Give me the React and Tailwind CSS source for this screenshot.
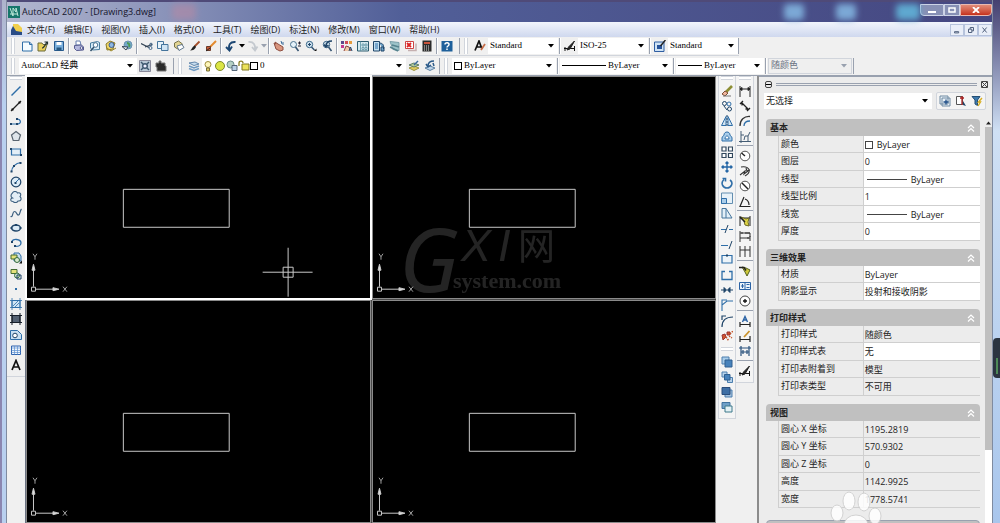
// src/App.jsx
import React, { useState } from "react";

const blue = "#2f6ea8";
const navy = "#1f4468";
const pale = "#a9cdea";

// All glyphs are drawn on a 12 x 12 grid
const icons = {
  newFile: <><path d="M1.5 2h7l2.500 2.500v6.500h-9.500z" fill="#f4fbff" stroke={blue} /><path d="M8.500 2v2.500h2.500" fill="none" stroke={blue} /></>,
  open: <><path d="M1 3h4l1 1.500h4l-2 6.500h-7z" fill="#e8cf5a" stroke="#6b6a3a" /><path d="M5 8c2 0 3-3 5-6M7.500 2h3v2.500" fill="none" stroke="#233" strokeWidth="1.200" /></>,
  save: <><path d="M1.500 1.500h9v9h-9z" fill="#7ab0dd" stroke="#285a8e" /><path d="M3.500 2h5v3h-5z" fill="#fff" /><path d="M3.500 7.500h5v3h-5z" fill="#24567f" /></>,
  print: <><path d="M3 1h4l1 4h-5z" fill="#fff" stroke="#667fae" /><path d="M1.500 5.500l7-.5 2 2v3l-7 .5-2-2z" fill="#b4b8dd" stroke="#565b8f" /><circle cx="8.500" cy="8" r="1.300" fill="#fff" stroke="#565b8f" /></>,
  preview: <><path d="M1.500 3l7-1.500 2 1v7l-7 .5-2-2z" fill="#d8ecf8" stroke="#477c9e" /><circle cx="6.500" cy="5" r="2.300" fill="#fff" stroke="#4a7390" /><path d="M5 7l-3.500 4" stroke="#30506b" strokeWidth="1.500" /></>,
  publish: <><path d="M1 4l4-3 5 2-2 6-6 1z" fill="#f0d768" stroke="#8b7a2a" /><circle cx="6.500" cy="5" r="2.500" fill="#8eb8e2" stroke="#3c5d93" /><path d="M2 8l4 3 5-3" stroke="#9a8523" fill="none" /></>,
  globe: <><circle cx="7" cy="5" r="4" fill="#74a9c9" stroke="#6b93b0" /><path d="M6 3c2 0 3 2 2 4" stroke="#4b9a53" strokeWidth="2" fill="none" /><path d="M1 6.500l4 3.500 2-3z" stroke="#345" fill="#e8eef2" /></>,
  cut: <><path d="M0 3.500l8 4M4 7l7-2.500" stroke="#345" strokeWidth="1.200" /><circle cx="9.500" cy="8" r="1.500" fill="none" stroke="#47698c" /><circle cx="10" cy="4.500" r="1.300" fill="none" stroke="#47698c" /></>,
  copyDoc: <><path d="M.5 1.500h6v7h-6z" fill="#e6f2fa" stroke="#44749c" /><path d="M4.500 4.500h6.500v6h-6.500z" fill="#cfe4f4" stroke="#44749c" /></>,
  paste: <><path d="M1.500 3l4-2 4 3-3 6-5-3z" fill="#e2d493" stroke="#77734c" /><path d="M4 6l5-1.500 2 3-5 3z" fill="#fff" stroke="#607890" /></>,
  brush: <><path d="M10.500 1.500l-5 5" stroke="#a5502c" strokeWidth="1.800" /><path d="M6 5.500c-3 1-3 4-5 5 3 0 5-1 6-3.500z" fill="#222" /></>,
  pencil: <><path d="M11 1l-6 6" stroke="#e38b2f" strokeWidth="2" /><path d="M1.500 6.500h4v4h-4z" fill="#cc5b37" stroke="#6a3b2a" /><path d="M5 8l-4 3" stroke="#222" /></>,
  undo: <path d="M10.500 2C5 1.500 3 5 4.500 10M1 7l3.500 3.500 2.500-4" fill="none" stroke="#1c4673" strokeWidth="1.900" />,
  redo: <path d="M1.500 2C7 1.500 8.500 5 8 10M5 7l3 3.500 2.500-4" fill="none" stroke="#c4c9cf" strokeWidth="1.800" />,
  pan: <><path d="M1 3l2 1-1-2 3 2 5 3v3l-3 1-4-2z" fill="#d9957d" stroke="#8f4e40" /><path d="M8 1l1 3M10 2v3" stroke="#3b6b99" /></>,
  zoomRt: <><circle cx="4.500" cy="4.500" r="3" fill="#e5f2fa" stroke="#4a7390" /><path d="M6.500 7l3 4" stroke="#335270" strokeWidth="1.500" /><path d="M9 3h3M10.500 1.500v3M9 6h3" stroke="#223" /></>,
  zoomWin: <><circle cx="4.500" cy="4.500" r="3.200" fill="#cfe2ef" stroke="#3a6788" /><path d="M3 4.500h3M4.500 3v3" stroke={navy} /><path d="M6.500 7l3 3" stroke="#335270" strokeWidth="1.500" /><path d="M9 11h2.500v-2.500z" fill="#111" /></>,
  zoomPrev: <><circle cx="5.500" cy="4.500" r="3.200" fill="#d8e8f2" stroke="#365e80" /><path d="M11 1c-4 0-6 2-6 5M3 4.500l2 2.500 2.500-2" fill="none" stroke={navy} strokeWidth="1.500" /><path d="M7.500 7l3 4" stroke="#335270" strokeWidth="1.600" /></>,
  props: <><path d="M0 1h3v3h-3z" fill="#5a4a8c" /><path d="M4 1h3v3h-3z" fill="#d04a58" /><path d="M8 1h3v3h-3z" fill="#e59b3c" /><path d="M0 5h3v3h-3z" fill="#c43a92" /><path d="M3 11l2-5 3 1 2 4" fill="#f0c8a8" stroke="#844" /><path d="M8 11l1.500-4 1.500 4" fill="none" stroke={navy} /></>,
  designCenter: <><path d="M.5 1.500h11v9.500h-11z" fill="#d5e9ee" stroke="#2d5d70" /><path d="M3.500 1.500v9.500M5 4h2v2h-2zM8 4h2v2h-2zM5 7.500h2v2h-2zM8 7.500h2v2h-2z" fill="none" stroke="#5b93a3" strokeWidth=".8" /></>,
  palettes: <><path d="M.5 1.500h6v9.500h-6z" fill="#c2def0" stroke={navy} /><path d="M2 4h3M2 6h3M2 8h3" stroke={blue} /><path d="M6 3c4 0 5 2 4.500 6M8 7h3v4h-3z" fill="#6da2c8" stroke={navy} /></>,
  sheetSet: <><path d="M1 1.500l9 1v8l-6-1z" fill="#9cc3c9" stroke="#7ba0aa" /><path d="M1 7l8 4M3 5l7 2" stroke="#55838e" strokeWidth="1.500" /></>,
  markup: <><path d="M.5 1.500h8v7h-8z" fill="#fff" stroke="#cc4444" /><path d="M2 3l4 4M6 3l-4 4" stroke="#d22" strokeWidth="1.800" /><path d="M3 10.500h8v-7" stroke="#c5b0b0" strokeWidth="1.500" fill="none" /></>,
  calc: <><path d="M1.500 0.500h9v11h-9z" fill="#2b2b2b" /><path d="M3 2h6v2h-6z" fill="#c9543c" /><path d="M3 6h6M3 8h6M3 10h6" stroke="#ddd" strokeDasharray="1 1" /></>,
  help: <><path d="M.5 1h11v10.500h-11z" fill="#1e609b" /><path d="M4 4.500c0-2.500 4.500-2 4 0 0 1.500-2 1.500-2 3M6 8.500v1.500" fill="none" stroke="#fff" strokeWidth="1.500" /></>,
  textStyle: <><path d="M1 10.500L5 1l3 8M2.500 7h4.500" fill="none" stroke="#111" strokeWidth="1.700" /><path d="M11 4l-4 6" stroke="#c66d48" strokeWidth="1.800" /></>,
  dimStyle: <><path d="M0 8.500h11M1 7v4M10.500 6v5" stroke="#111" /><path d="M10.500 1l-6 6-1.500 3 3-1z" fill="#222" stroke="#222" /></>,
  tableStyle: <><path d="M.5 2h9.500v9.500h-9.500z" fill="#cfe3f5" stroke="#2f5ea2" /><path d="M3 5h5v4h-5z" fill="#27539a" /><path d="M11.500 0l-5 6" stroke="#222" strokeWidth="1.500" /></>,
  gear: <><path d="M.5.500h11v11h-11z" fill="#b8c7d4" stroke="#889" /><circle cx="6" cy="6" r="2.300" fill="#eef" stroke="#3c566e" strokeWidth="1.400" /><path d="M2 2l2 2M10 2l-2 2M2 10l2-2M10 10l-2-2" stroke="#3c566e" strokeWidth="1.400" /></>,
  home: <path d="M1 3h3V1h2v2h4v3h1v5h-9v-4h-1z" fill="#2a2a2a" stroke="#777" />,
  layers: <><path d="M1 3l6-1 4 2-5 1.500z" fill="#c7ddef" stroke="#6488ac" /><path d="M1 6l5 2 5-2M1 8.500l5 2 5-2" fill="none" stroke="#6f9ac2" strokeWidth="1.500" /></>,
  bulb: <><circle cx="6" cy="4.500" r="3" fill="#fff7bb" stroke="#9d8c3d" /><path d="M4.500 8h3v3h-3z" fill="#e0c75c" stroke="#77703b" /></>,
  sun: <circle cx="6" cy="6" r="4.500" fill="#dbe545" stroke="#7d882b" />,
  vpFreeze: <><circle cx="4.500" cy="4.500" r="3.500" fill="#b5d0c5" stroke="#6b8c8c" /><path d="M6 5.500h5v5h-5z" fill="#b9d1e6" stroke="#567" /></>,
  lock: <><path d="M1 6V3c0-2.500 4-2.500 4 0" fill="none" stroke="#8a7f24" strokeWidth="1.300" /><path d="M4 4h7v6h-7z" fill="#ece25a" stroke="#81791f" /></>,
  layerCur: <><path d="M1 8l5-2 5 2-5 2.500z" fill="#e0ca5c" stroke="#9b9440" /><path d="M1 5l5-2 5 2-5 2z" fill="#b9cf9c" stroke="#5c7c65" /><path d="M10 1L6 5" stroke="#3b6a9d" strokeWidth="1.500" /></>,
  layerPrev: <><path d="M1 8l5-2 5 2-5 2.500z" fill="#bcd3e8" stroke="#5b81a4" /><path d="M10 1c-4 0-6 1-6 5M2 4l2 3 3-2M9 3l1 3" fill="none" stroke="#2b5a89" strokeWidth="1.500" /></>,
  line: <path d="M1.500 10.500l9-9" stroke={blue} strokeWidth="1.400" />,
  xline: <><path d="M1 11l10-10" stroke="#222" strokeWidth="1.200" /><path d="M1.500 8.500h2v2h-2zM8.500 1.500h2v2h-2z" fill="#111" /></>,
  pline: <><path d="M1 9h6c5 0 4-5 0-5" fill="none" stroke={blue} strokeWidth="1.200" /><path d="M0 8h2v2h-2zM6 8h2v2h-2zM6 3h2v2h-2z" fill={navy} /></>,
  polygon: <path d="M6 1.500l4.500 3.500-1.700 5.500h-5.600l-1.700-5.500z" fill="#dfe5ea" stroke="#5a6570" strokeWidth="1.200" />,
  rect: <><path d="M1.500 3h9v6h-9z" fill="#e3eef7" stroke={blue} strokeWidth="1.200" /><path d="M0 2h2v2h-2zM10 8h2v2h-2z" fill={navy} /></>,
  arc: <><path d="M1.500 11c0-5 4-9 9.500-9.500" fill="none" stroke={blue} strokeWidth="1.200" /><path d="M.5 9.500h2v2h-2zM3 4h2v2h-2zM9.500 1h2v2h-2z" fill={navy} /></>,
  circle: <><circle cx="6" cy="6" r="4.800" fill="#dcebf6" stroke={navy} strokeWidth="1.200" /><path d="M5 7l4-4" stroke={blue} /><path d="M4.500 6h2v2h-2z" fill={navy} /></>,
  cloud: <path d="M2.500 2c1-2 4-2 5 0 3-1 4 1.500 2.500 3.500 2 2 1 5-2 4.500-1 2-4 2-5 .5-3 0-3-3-.5-3.500C.500 6 .500 3.500 2.500 2z" fill="#e3edf5" stroke="#3c5f80" strokeWidth="1.100" />,
  spline: <path d="M.5 9.500c3 1 1.500-5 4-5s2 4 4 3.500 1-4 3-6" fill="none" stroke="#3c5f80" strokeWidth="1.200" />,
  ellipse: <><ellipse cx="6" cy="6" rx="4.500" ry="3" fill="#dcebf6" stroke={navy} strokeWidth="1.300" /><path d="M.5 5h2v2h-2zM9.500 5h2v2h-2zM5 2h2v2h-2z" fill={navy} /></>,
  ellArc: <><path d="M2 5c0-4 9-3 9 1 0 3-4 4-6 3" fill="none" stroke={blue} strokeWidth="1.300" /><path d="M1 4h2v2h-2zM4 8h2v2h-2z" fill={navy} /></>,
  insert: <><path d="M4 1h5l2 3v5h-7z" fill="#c9dff0" stroke={blue} /><path d="M1 3h6v4h-6z" fill="#e5e27a" stroke="#446b32" /><circle cx="7" cy="8" r="2.500" fill="#d8ead0" stroke="#346a3c" /><path d="M9 11.500h3v-3z" fill="#111" /></>,
  block: <><path d="M1 1.500h6v4h-6z" fill="#e5e27a" stroke="#446b32" /><circle cx="7" cy="7.500" r="2.500" fill="#c9e2c9" stroke="#346a3c" /><path d="M7 7h4v4h-4z" fill="none" stroke={navy} /></>,
  point: <path d="M5 5h2v2h-2z" fill={blue} />,
  hatch: <><path d="M2 2.500h8v7h-8z" fill="#cfe4f4" stroke={blue} /><path d="M3 8l5-5M5 9l4-4M2 0v12M10 0v12M0 2.500h12M0 9.500h12" stroke={blue} strokeWidth=".8" /></>,
  gradient: <><path d="M2 2.500h8v7h-8z" fill="#546172" stroke="#161e29" /><path d="M2 0v12M10 0v12M0 2.500h12M0 9.500h12" stroke="#161e29" /></>,
  region: <><path d="M.5 1.500h7l4 4v5h-11z" fill="#c7dff2" stroke={blue} /><circle cx="5" cy="6.500" r="2.300" fill="#fff" stroke={navy} /></>,
  table: <><path d="M1.500 2h9v8.500h-9z" fill="#eef5fc" stroke="#2e63ae" /><path d="M1.500 4h9M1.500 6.500h9M1.500 8.500h9M4.500 2v8.500M7.500 2v8.500" stroke="#5b8fd0" strokeWidth=".7" /></>,
  mtext: <path d="M2 11L6 1.500l4 9.500M3.500 8h5" fill="none" stroke="#111" strokeWidth="1.700" />,
  erase: <><path d="M11 1l-6 6" stroke="#8d8f34" strokeWidth="2.600" /><path d="M1 9l3-3 3 2-3 3z" fill="#eeb59c" stroke="#7d4e35" /><path d="M2 11h8" stroke="#777" /></>,
  copy: <><circle cx="3.500" cy="3.500" r="2" fill="none" stroke={navy} /><circle cx="8" cy="4" r="2" fill="none" stroke={blue} /><path d="M3 6l3 4" stroke={navy} /><circle cx="8.500" cy="9" r="2" fill="none" stroke={navy} /></>,
  mirror: <><path d="M5 1.500v9h-4.500zM7 1.500v9h4.500z" fill="#d4e4f0" stroke={blue} /><path d="M6 0v12" stroke={navy} strokeDasharray="2 1" /></>,
  offset: <><path d="M1 7c0-2 2-2 2-3 0-4 6-4 6 0 0 1 2 1 2 3v3h-10z" fill={pale} stroke={blue} /><path d="M4 8c0-4 4-4 4 0z" fill="#fff" stroke={blue} /></>,
  array: <path d="M1 1h4v4h-4zM7.500 1h4v4h-4zM1 7.500h4v4h-4zM7.500 7.500h4v4h-4z" fill="#fff" stroke="#31475c" strokeWidth="1.200" />,
  move: <path d="M6 1v10M1 6h10M4.500 2.500L6 1l1.500 1.500M4.500 9.500L6 11l1.500-1.500M2.500 4.500L1 6l1.500 1.500M9.500 4.500L11 6l-1.500 1.500" fill="none" stroke="#2566a5" strokeWidth="1.400" />,
  rotate: <path d="M3 2.500C-1 6 2 11 6 11s7-5 3-8M1.500 1.500h3v3" fill="none" stroke={blue} strokeWidth="1.600" />,
  scale: <><path d="M.5 1h11v10.500h-11z" fill="#e7f1f8" stroke="#638eb0" /><path d="M.5 6.500h5v5h-5z" fill={pale} stroke={blue} /></>,
  stretch: <path d="M1 1.500h4l6 9.500h-10zM5 1.500v9.500" fill="#e2eef7" stroke="#44749c" />,
  trim: <><path d="M0 6.500h5M8 6.500h4" stroke={blue} /><path d="M4 10l3-8" stroke={navy} /></>,
  extend: <><path d="M0 7.500h7" stroke={blue} /><path d="M8 11l3-8" stroke={navy} /></>,
  breakPt: <><path d="M1 2.500h10v7.500h-10z" fill="#edf4f9" stroke={blue} strokeWidth="1.200" /><path d="M5 1.500h2v2h-2z" fill={navy} /></>,
  breakGap: <path d="M4 2.500h-3v8h10v-8h-3" fill="none" stroke={blue} strokeWidth="1.300" />,
  join: <path d="M0 6h4M8 6h4M3 3.500v5L5.500 6zM9 3.500v5L6.500 6z" fill={navy} stroke={navy} />,
  chamfer: <path d="M1 12V6l5-4h6M1 6v-5h5" fill="none" stroke={blue} strokeWidth="1.100" />,
  fillet: <path d="M1 12C1 5 5 2 12 2M1 5v-4h4" fill="none" stroke={navy} strokeWidth="1.200" />,
  explode: <><path d="M1 5l3-1 1 3-3 3zM6 2h3v3h-3z" fill="#d1552d" stroke="#933" /><path d="M5 7l3 4M8 6l3 2M9 4l3-3" stroke="#c4572b" strokeDasharray="1.500 1" strokeWidth="1.500" /></>,
  front: <><path d="M1 1h7v7h-7z" fill={pale} stroke="#4c7fae" /><path d="M4 4h7v7h-7z" fill="#4782bb" stroke="#2e5f90" /></>,
  back: <><path d="M1 1h5v5h-5zM6.500 6.500h5v5h-5z" fill="#b7d2ea" stroke="#4c7fae" /><path d="M3.500 3.500h5.500v5.500h-5.500z" fill="#4782bb" stroke="#2e5f90" /></>,
  above: <><path d="M4 4h7v7h-7z" fill="#a5c2de" stroke="#4c7fae" /><path d="M1 1.500h8v7h-8z" fill="#3f6fa5" stroke="#2b4e7c" /></>,
  under: <><path d="M1 1.500h8v6h-8z" fill="#6e9fc7" stroke="#3f729e" /><path d="M4 5h7v6h-7z" fill="#e3f1f5" stroke="#3d788a" /></>,
  dimLin: <path d="M1 1v11M11 1v11M1 4h10M1 4l2-1.500v3zM11 4L9 2.500v3z" stroke="#222" fill="#222" />,
  dimAli: <path d="M3 3l6 6M1 4l3-3M8 11l3-3M3 3v2.500M9 9h-2.500" stroke="#222" strokeWidth="1.300" fill="none" />,
  dimArc: <><path d="M1 11C1 5 5 1 11 1.500" fill="none" stroke="#333" strokeWidth="1.300" /><path d="M5 11c0-3 2-5 6-5" fill="none" stroke={blue} strokeWidth="1.300" /></>,
  dimOrd: <path d="M2 0v12M0 10.500h12M2 4h3M5 9l1-4h3l2-4M9 5v5" fill="none" stroke="#445c74" />,
  dimRad: <><circle cx="6" cy="6" r="4.800" fill="#fff" stroke="#555" /><path d="M6 6L2.500 3" stroke="#222" strokeWidth="1.400" /></>,
  dimJog: <path d="M2 2c5-1 9 1 8 5-1 3-3 3-4 4M1 10l5-4-1 3 4-3M7 3l1 3 3-1" fill="none" stroke="#333" strokeWidth="1.100" />,
  dimDia: <><circle cx="6" cy="6" r="4.800" fill="#fff" stroke="#555" /><path d="M3 3l6 6" stroke="#222" strokeWidth="1.400" /></>,
  dimAng: <path d="M5 1L1 10.500h10.500M6 3c3 1 4 3 4 6" fill="none" stroke="#222" strokeWidth="1.200" />,
  quick: <><path d="M1 1v10M11 1v10M1 3h10" stroke="#222" /><path d="M2 2l5 2 3-1-1 4 1 4-4-1-1-4z" fill="#dfd445" stroke="#6b6823" /><path d="M1 2l5 5" stroke="#222" strokeWidth="1.500" /></>,
  base: <path d="M1 1v11M6 3h5v4M1 3h10M1 8h10M11 6v5M3 2v2M9 7v2" stroke="#333" fill="none" />,
  cont: <path d="M1 1v11M6 1v11M11 1v11M1 5h10" stroke="#333" fill="none" />,
  leader: <><path d="M3 2l4 1 4 2-1 2-2 4-2-4z" fill="#cfc93c" stroke="#53601f" /><path d="M0 2.500h5l2 3" fill="none" stroke="#222" strokeWidth="1.500" /></>,
  tol: <><path d="M.5 2.500h11v7h-11z" fill="#eaf3fb" stroke="#2a62a5" /><path d="M6 2.500v7M2 6h3M3.500 4v4M7.500 4.500h3M7.500 7.500h3" stroke="#2a62a5" /></>,
  center: <><circle cx="6" cy="6" r="5" fill="#fff" stroke="#444" /><path d="M6 4v4M4 6h4" stroke="#111" strokeWidth="1.300" /></>,
  dimEdit: <><path d="M3.500 7L6 1.500l2.500 5.500M4.500 5h3" fill="none" stroke="#2a62a5" strokeWidth="1.400" /><path d="M1 7v5M11 7v5M1 9.500h10" stroke="#222" strokeWidth="1.200" /></>,
  dimText: <><path d="M10.500 1L5 7" stroke="#c9922c" strokeWidth="1.800" /><path d="M1 6v6M11 6v6M1 9.500h10" stroke="#222" strokeWidth="1.200" /></>,
  update: <path d="M2 1v10M10 1v10M0 3h12M2 7h8M4 5v4M8 5v4" stroke="#28517c" strokeWidth="1.200" fill="none" />,
  pick: <><path d="M1.500 1.500h6v8h-6z" fill="#fff" stroke="#555" /><path d="M7 1v9M5 3h4" stroke="#a22" strokeWidth="1.300" /><path d="M8 6l3 5-3-1z" fill={navy} /></>,
  pickAdd: <><path d="M1 1h8v8h-8zM3 3h8v8h-8z" fill="#e8f0f7" stroke="#6f8aa2" /><path d="M7 4.500v5M4.500 7h5" stroke="#1d4c86" strokeWidth="1.300" /></>,
  filter: <><path d="M1 1.500h8L6.500 5v5.500L4 9V5z" fill="#3d79ad" stroke="#244f76" /><path d="M11 3L7.500 7h2L7 11" stroke="#d8ae21" fill="none" strokeWidth="1.400" /></>,
};

const menus = [
  "文件(F)", "编辑(E)", "视图(V)", "插入(I)", "格式(O)", "工具(T)",
  "绘图(D)", "标注(N)", "修改(M)", "窗口(W)", "帮助(H)",
];

const drawTools = [
  "line", "xline", "pline", "polygon", "rect", "arc", "circle", "cloud", "spline", "ellipse",
  "ellArc", "insert", "block", "point", "hatch", "gradient", "region", "table", "mtext",
];

const modifyTools = [
  "erase", "copy", "mirror", "offset", "array", "move", "rotate", "scale", "stretch", "trim",
  "extend", "breakPt", "breakGap", "join", "chamfer", "fillet", "explode",
];

const dimGroups = [
  ["dimLin", "dimAli", "dimArc", "dimOrd"],
  ["dimRad", "dimJog", "dimDia", "dimAng"],
  ["quick", "base", "cont"],
  ["leader", "tol", "center"],
  ["dimEdit", "dimText", "update"],
  ["dimStyle"],
];

const sections = [
  {
    title: "基本",
    rows: [
      { name: "颜色", value: "ByLayer", swatch: true, edit: true },
      { name: "图层", value: "0", edit: true },
      { name: "线型", value: "ByLayer", line: true, edit: true },
      { name: "线型比例", value: "1", edit: true },
      { name: "线宽", value: "ByLayer", line: true, edit: true },
      { name: "厚度", value: "0", edit: true },
    ],
  },
  {
    title: "三维效果",
    rows: [
      { name: "材质", value: "ByLayer", edit: true },
      { name: "阴影显示", value: "投射和接收阴影", edit: true },
    ],
  },
  {
    title: "打印样式",
    rows: [
      { name: "打印样式", value: "随颜色" },
      { name: "打印样式表", value: "无", edit: true },
      { name: "打印表附着到", value: "模型" },
      { name: "打印表类型", value: "不可用" },
    ],
  },
  {
    title: "视图",
    rows: [
      { name: "圆心 X 坐标", value: "1195.2819" },
      { name: "圆心 Y 坐标", value: "570.9302" },
      { name: "圆心 Z 坐标", value: "0" },
      { name: "高度", value: "1142.9925" },
      { name: "宽度", value: "1778.5741" },
    ],
  },
];

function Icon({ name }) {
  return (
    <svg viewBox="0 0 12 12" className="h-3 w-3 shrink-0" aria-hidden="true">
      {icons[name]}
    </svg>
  );
}

function Tool({ name }) {
  return (
    <button aria-label={name} className="flex h-4 w-4 shrink-0 items-center justify-center">
      <Icon name={name} />
    </button>
  );
}

function Tools({ names }) {
  return names.map((name) => <Tool key={name} name={name} />);
}

function Arrow({ dim }) {
  return (
    <svg viewBox="0 0 6 4" className={dim ? "h-1 w-[6px] shrink-0 text-gray-400" : "h-1 w-[6px] shrink-0 text-black"}>
      <path d="M0 0h6L3 3.500z" fill="currentColor" />
    </svg>
  );
}

function Sep() {
  return <span className="mx-px h-4 w-[2px] shrink-0 border-l border-gray-400 bg-white" />;
}

function Grip() {
  return <span className="mx-1 h-4 w-1 shrink-0 border-x border-gray-300 bg-white" />;
}

function VGrip() {
  return <span className="mb-[3px] h-1 w-3 shrink-0 border-y border-gray-300 bg-white" />;
}

function Combo({ label, value, className, children, disabled }) {
  return (
    <label className={`flex h-4 shrink-0 items-center pr-1 ${disabled ? "border border-gray-300 bg-[#efefef]" : "bg-white"} ${className}`}>
      {children}
      <select
        aria-label={label}
        disabled={disabled}
        className="h-4 min-w-0 flex-1 appearance-none bg-transparent pl-[2px] disabled:text-gray-500"
      >
        <option>{value}</option>
      </select>
      <Arrow dim={disabled} />
    </label>
  );
}

function TitleBar() {
  return (
    <header className="flex h-[22px] shrink-0 items-center border-t-2 border-[#4f4a78] bg-linear-to-r from-[#b3b7cf] via-[#515f98] via-40% to-[#454781] pl-px text-[#14142b]">
      <svg viewBox="0 0 12 12" className="mr-[2px] h-3 w-3">
        <path d="M0 0h12v12H0z" fill="#16766b" />
        <path d="M2 2l3 8V2l3 4V2l2 8M2 8h8" fill="none" stroke="#bfeadb" />
      </svg>
      <h1 className="text-[9px]">AutoCAD 2007 - [Drawing3.dwg]</h1>
      <span className="ml-4 h-4 w-6 rounded bg-[#b58aa5] opacity-60 blur-[3px]" />
      <div className="ml-auto flex h-full items-start pt-[2px]">
        <span className="mr-8 h-4 w-5 rounded bg-[#7ca9d6] blur-[3px]" />
        <span className="mr-10 h-4 w-5 rounded bg-[#7ca9d6] blur-[3px]" />
        <span className="h-4 w-6 rounded bg-[#5fa9d0] blur-[3px]" />
        <button aria-label="最小化" className="flex h-3 w-6 items-center justify-center rounded-bl border border-[#ccd3e6] bg-[#8790b5]">
          <svg viewBox="0 0 8 6" className="h-[6px] w-2"><path d="M0 4h8v2H0z" fill="#fff" /></svg>
        </button>
        <button aria-label="还原" className="flex h-3 w-4 items-center justify-center border border-[#ccd3e6] bg-[#8790b5]">
          <svg viewBox="0 0 8 6" className="h-[6px] w-2"><path d="M1 1h6v4H1z" fill="none" stroke="#fff" strokeWidth="1.500" /></svg>
        </button>
        <button aria-label="关闭" className="flex h-3 w-8 items-center justify-center rounded-br border border-[#e8b8b0] bg-linear-to-b from-[#e08a78] to-[#c5301b]">
          <svg viewBox="0 0 8 6" className="h-[6px] w-2"><path d="M1 0l6 6M7 0L1 6" stroke="#fff" strokeWidth="1.800" /></svg>
        </button>
      </div>
    </header>
  );
}

function MenuBar() {
  return (
    <nav className="flex h-[15px] shrink-0 items-center bg-linear-to-b from-[#f2f5fc] to-[#cfd8ee] pl-1 text-[9px] text-[#222]">
      <svg viewBox="0 0 12 12" className="mr-1 h-3 w-3">
        <path d="M2 0h5l4 4v7H2z" fill="#f1cf4d" />
        <path d="M0 6l2-4 3 5 6 1v3H0z" fill="#294c87" />
      </svg>
      <div className="flex gap-[9px]">
        {menus.map((menu) => (
          <button key={menu} className="leading-3">{menu}</button>
        ))}
      </div>
      <div className="ml-auto flex text-[#52627e]">
        {["M3 8h5v1.500H3z", "M3 5h4v4H3zM5 5V3h4v4H7", "M3 3l5 6M8 3L3 9"].map((d, i) => (
          <button key={d} aria-label={["最小化", "还原", "关闭"][i]} className="h-3 w-[14px] border border-[#b6c3dc] bg-[#e9eef8]">
            <svg viewBox="0 0 12 12" className="h-[10px] w-3"><path d={d} fill="none" stroke="currentColor" strokeWidth="1.200" /></svg>
          </button>
        ))}
      </div>
    </nav>
  );
}

function Toolbars() {
  return (
    <div className="shrink-0 bg-[#f0f0f0] font-['Liberation_Serif','Noto_Sans_CJK_SC',serif] text-[9px] text-black">
      <div className="flex h-[19px] w-fit items-center border-b border-gray-300">
        <Grip />
        <Tools names={["newFile", "open", "save"]} />
        <Sep />
        <Tools names={["print", "preview", "publish", "globe"]} />
        <Sep />
        <Tools names={["cut", "copyDoc", "paste", "brush", "pencil"]} />
        <Sep />
        <Tool name="undo" />
        <Arrow />
        <Tool name="redo" />
        <Arrow dim />
        <Sep />
        <Tools names={["pan", "zoomRt", "zoomWin", "zoomPrev"]} />
        <Sep />
        <Tools names={["props", "designCenter", "palettes", "sheetSet", "markup", "calc"]} />
        <Sep />
        <Tool name="help" />
        <span className="ml-1 h-4 border-l border-gray-400" />
        <Grip />
        <Tool name="textStyle" />
        <Combo label="文字样式" value="Standard" className="w-[70px]" />
        <Sep />
        <Tool name="dimStyle" />
        <Combo label="标注样式" value="ISO-25" className="w-[70px]" />
        <Sep />
        <Tool name="tableStyle" />
        <Combo label="表格样式" value="Standard" className="w-[70px]" />
        <span className="h-4 border-r border-gray-400" />
      </div>
      <div className="flex h-[19px] w-fit items-center">
        <Grip />
        <Combo label="工作空间" value="AutoCAD 经典" className="w-[118px]" />
        <Tools names={["gear", "home"]} />
        <span className="ml-1 h-4 border-l border-gray-400" />
        <Grip />
        <Tool name="layers" />
        <Combo label="图层" value="0" className="w-[204px]">
          <Icon name="bulb" />
          <Icon name="sun" />
          <Icon name="vpFreeze" />
          <Icon name="lock" />
          <span className="h-2 w-2 shrink-0 border border-black" />
        </Combo>
        <Tools names={["layerCur", "layerPrev"]} />
        <span className="ml-px h-4 border-l border-gray-400" />
        <Grip />
        <Combo label="颜色" value="ByLayer" className="w-[104px]">
          <span className="ml-[2px] h-2 w-2 shrink-0 border border-black" />
        </Combo>
        <Sep />
        <Combo label="线型" value="ByLayer" className="w-[112px]">
          <span className="ml-[2px] w-11 border-t border-black" />
        </Combo>
        <Sep />
        <Combo label="线宽" value="ByLayer" className="w-[88px]">
          <span className="ml-[2px] w-6 border-t border-black" />
        </Combo>
        <Sep />
        <Combo label="打印样式" value="随颜色" disabled className="w-[84px]" />
        <span className="ml-px h-4 border-r border-gray-400" />
      </div>
    </div>
  );
}

function Viewport({ active, cursor }) {
  return (
    <div className={`min-h-0 min-w-0 overflow-hidden border bg-black ${active ? "border-white outline outline-white" : "border-[#8a8a8a]"}`}>
      <svg viewBox="0 0 343 220" preserveAspectRatio="xMinYMin meet" className="h-full w-full" fill="none" stroke="#c9c9c9">
        <path d="M96.500 112.500h106v38h-106z" />
        <path d="M4.500 210.500h4v4h-4zM6.500 210v-18M9 212.500h18" />
        <path d="M5 193.500l1.500-6 1.500 6zM26 211l6 1.500-6 1.500z" fill="#ddd" />
        <path d="M6 177l2 3v3M10 177l-2 3M36 210l4 5M40 210l-4 5" strokeWidth=".8" />
        {cursor && <path d="M236 195.500h50M261.500 171v49M256.500 190.500h10v10h-10z" />}
      </svg>
    </div>
  );
}

// Faint site mark lying over the drawing area
function Watermark() {
  return (
    <svg viewBox="0 -60 210 200" className="pointer-events-none absolute top-1/5 left-1/2 h-[200px] w-[210px]" fill="#fff" opacity=".14">
      <text x="28" y="67" fontSize="88" fontStyle="italic" fontFamily="Noto Sans, sans-serif">G</text>
      <text x="90" y="36" fontSize="45" fontStyle="italic" fontFamily="Liberation Sans, sans-serif">X</text>
      <text x="127" y="36" fontSize="45" fontStyle="italic" fontFamily="Liberation Sans, sans-serif">I</text>
      <text x="147" y="35" fontSize="37" fontFamily="Noto Sans CJK SC, sans-serif">网</text>
      <text x="82" y="63" fontSize="22" fontWeight="700" fontFamily="Liberation Serif, serif">system.com</text>
    </svg>
  );
}

function Section({ title, rows }) {
  return (
    <section className="mb-2">
      <h2 className="flex h-[17px] items-center justify-between rounded-t bg-[#c0c0c0] px-1 font-bold">
        {title}
        <button aria-label="折叠" className="pr-px">
          <svg viewBox="0 0 8 8" className="h-2 w-2"><path d="M1 4l3-3 3 3M1 7.500l3-3 3 3" fill="none" stroke="#fff" strokeWidth="1.200" /></svg>
        </button>
      </h2>
      <div className="pl-3">
        <table className="w-full table-fixed border-separate border-spacing-0 border-l border-[#cfcfcf]">
          <tbody>
            {rows.map((row) => (
              <tr key={row.name} className="odd:h-[17px] even:h-[18px]">
                <th className="w-5/12 border-b border-[#cfcfcf] p-0 pl-[2px] text-left align-top font-normal leading-4">{row.name}</th>
                <td className={`border-b border-l border-[#cfcfcf] p-0 pt-px pl-px leading-[14px] ${row.edit ? "bg-white" : "bg-[#ececec]"}`}>
                  <div className="flex items-center">
                    {row.swatch && <span className="mr-1 h-2 w-2 border border-[#444]" />}
                    {row.line && <span className="mr-1 ml-[2px] w-10 border-t border-[#444]" />}
                    {row.value}
                  </div>
                </td>
              </tr>
            ))}
          </tbody>
        </table>
      </div>
    </section>
  );
}

function Properties() {
  return (
    <aside className="relative ml-[3px] flex w-[235px] shrink-0 flex-col overflow-hidden border-l-2 border-[#8c8c8c] bg-[#ececec] text-[9px] text-[#222]">
      <div className="flex h-4 shrink-0 items-center gap-1 border-t border-gray-400 pr-1 pl-[6px]">
        <button aria-label="最小化" className="flex h-[7px] w-[7px] items-center rounded-xs border border-[#444]"><span className="w-full border-t border-black" /></button>
        <span className="h-[3px] flex-1 border-y border-gray-400" />
        <button aria-label="关闭">
          <svg viewBox="0 0 7 7" className="block h-[7px] w-[7px]"><path d="M.5.500h6v6h-6zM1 1l5 5M6 1L1 6" fill="none" stroke="#444" /></svg>
        </button>
      </div>
      <div className="flex shrink-0 items-center pr-[6px] pl-[5px]">
        <Combo label="选择" value="无选择" className="mr-1 flex-1" />
        <div className="flex rounded-xs border border-gray-300 bg-[#f4f4f4]">
          <Tools names={["pickAdd", "pick", "filter"]} />
        </div>
      </div>
      <div className="mt-[9px] flex min-h-0 flex-1">
        <div className="min-w-0 flex-1 overflow-hidden pr-[5px] pl-[7px]">
          {sections.map((section) => (
            <Section key={section.title} title={section.title} rows={section.rows} />
          ))}
          <div className="mt-3 h-3 rounded-t border border-gray-400 bg-[#c0c0c0]" />
        </div>
        <div className="flex w-[7px] flex-col items-center bg-white">
          <svg viewBox="0 0 7 8" className="h-2 w-[7px] shrink-0"><path d="M0 0h7v8H0z" fill="#ececec" /><path d="M1 5.500L3.500 2.500 6 5.500z" fill="#222" /></svg>
          <div className="h-4/5 w-full bg-[#bfbfbf]" />
        </div>
      </div>
      <svg viewBox="0 0 56 34" className="absolute bottom-0 left-[70px] h-[34px] w-14" fill="#fff" stroke="#ccc" opacity=".85" aria-hidden="true">
        <ellipse cx="8" cy="24" rx="6" ry="8" />
        <ellipse cx="20" cy="12" rx="6" ry="9" />
        <ellipse cx="35" cy="13" rx="6" ry="9" />
        <ellipse cx="46" cy="27" rx="6" ry="8" />
        <ellipse cx="27" cy="36" rx="12" ry="10" />
      </svg>
    </aside>
  );
}

export default function App() {
  const [active] = useState(0);

  return (
    <div className="flex h-screen overflow-hidden border-l-2 border-[#8b86b0] bg-[#b9d0ef] font-['Open_Sans','Noto_Sans_CJK_SC',sans-serif]">
      <div className="w-1 shrink-0 bg-linear-to-b from-[#aeb3cc] to-[#b9d0ef] to-20%" />
      <div className="flex min-w-0 flex-1 flex-col border-x border-[#7f8ba0] bg-[#f0f0f0]">
        <TitleBar />
        <MenuBar />
        <Toolbars />
        <main className="flex min-h-0 flex-1 border-t border-gray-400">
          <div className="flex h-fit w-[18px] shrink-0 flex-col items-center border-b border-gray-300 pb-1">
            <VGrip />
            <div className="[&>*]:h-[15px] [&>*:nth-child(4n)]:h-4">
              <Tools names={drawTools} />
            </div>
          </div>
          <div className="relative grid min-w-0 flex-1 grid-cols-2 grid-rows-2 gap-px border-l border-gray-500 bg-[#4a4a4a]">
            {[0, 1, 2, 3].map((i) => (
              <Viewport key={i} active={i === active} cursor={i === 0} />
            ))}
            <Watermark />
          </div>
          <div className="ml-[2px] flex h-fit w-[18px] shrink-0 flex-col items-center border-x border-b border-gray-300 bg-[#f4f4f4] pb-1">
            <VGrip />
            <div className="[&>*]:h-[15px] [&>*:nth-child(3n)]:h-4">
              <Tools names={modifyTools} />
            </div>
            <span className="h-1" />
            <VGrip />
            <div className="[&>*]:h-[15px]">
              <Tools names={["front", "back", "above", "under"]} />
            </div>
          </div>
          <div className="flex h-fit w-[18px] shrink-0 flex-col items-center border-r border-b border-gray-300 bg-[#f4f4f4] pb-px">
            <VGrip />
            {dimGroups.map((group) => (
              <div key={group[0]} className="mb-[2px] border-b border-gray-400 pb-px last:border-b-0 [&>*]:h-[15px] [&>*:nth-child(3n)]:h-4">
                <Tools names={group} />
              </div>
            ))}
          </div>
          <Properties />
        </main>
      </div>
      <div className="flex w-[7px] shrink-0 flex-col bg-linear-to-b from-[#454070] via-[#cfe0f4] via-25% to-[#a9c6ec]">
        <div className="mt-[338px] flex h-10 items-end justify-center rounded-l bg-[#2b3440] pb-1">
          <span className="h-4 w-[2px] bg-[#4e8a58]" />
        </div>
      </div>
    </div>
  );
}
